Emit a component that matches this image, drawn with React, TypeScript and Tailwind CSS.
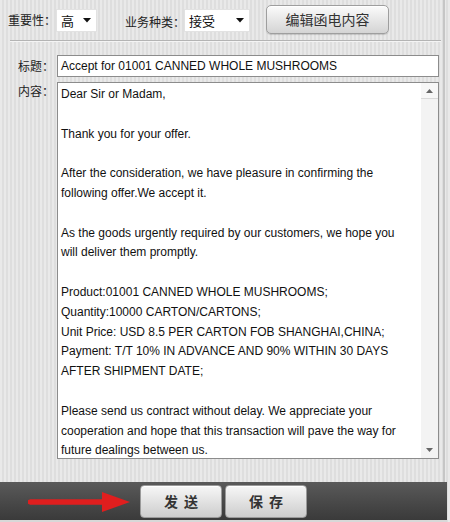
import React from "react";

const CJK = "font-['Noto_Sans_CJK_SC','Noto_Sans',sans-serif]";
const LATIN = "font-['Liberation_Sans','Noto_Sans_CJK_SC',sans-serif]";

const lines = [
  "Dear Sir or Madam,",
  "",
  "Thank you for your offer.",
  "",
  "After the consideration, we have pleasure in confirming the",
  "following offer.We accept it.",
  "",
  "As the goods urgently required by our customers, we hope you",
  "will deliver them promptly.",
  "",
  "Product:01001 CANNED WHOLE MUSHROOMS;",
  "Quantity:10000 CARTON/CARTONS;",
  "Unit Price: USD 8.5 PER CARTON FOB SHANGHAI,CHINA;",
  "Payment: T/T 10% IN ADVANCE AND 90% WITHIN 30 DAYS",
  "AFTER SHIPMENT DATE;",
  "",
  "Please send us contract without delay. We appreciate your",
  "cooperation and hope that this transaction will pave the way for",
  "future dealings between us.",
];

const Caret = () => (
  <svg width="8" height="5" viewBox="0 0 8 5" className="shrink-0">
    <path d="M0 0h8L4 4.5z" fill="#111" />
  </svg>
);

const Select = ({ value, w }: { value: string; w: string }) => (
  <div className={`flex h-[21px] ${w} items-center justify-between bg-white pl-[4px] pr-[5px] shadow-[0_0_0_1px_#e2e2e2]`}>
    <span className={`${CJK} text-[13px] leading-none text-[#111]`}>{value}</span>
    <Caret />
  </div>
);

const BarButton = ({ label }: { label: string }) => (
  <button className={`${CJK} flex h-[33px] w-[82px] items-center justify-center rounded-[4px] border border-[#9a9a9a] bg-gradient-to-b from-[#f7f7f7] to-[#cdcdcd] text-[14px] font-bold tracking-[6px] text-[#333] shadow-[inset_0_1px_0_#fff]`}>
    <span className="pl-[6px]">{label}</span>
  </button>
);

export default function App() {
  return (
    <div className="flex h-[522px] w-[450px] flex-col overflow-hidden bg-[repeating-linear-gradient(90deg,#e9e9e9_0px,#e9e9e9_2px,#dedede_2px,#dedede_4px)]">
      <div className="flex w-[445px] flex-1 flex-col border-r-2 border-[#c6c6c6]">
        {/* top row */}
        <div className="flex h-[40px] items-center">
          <span className={`${CJK} ml-[8px] w-[49px] text-[12px] text-[#222]`}>重要性：</span>
          <Select value="高" w="w-[39px]" />
          <span className={`${CJK} ml-[29px] mt-[3px] w-[60px] text-[12px] text-[#222]`}>业务种类：</span>
          <Select value="接受" w="w-[64px]" />
          <button className={`${CJK} ml-[17px] mt-[-1px] h-[29px] w-[123px] rounded-[5px] border border-[#9e9e9e] bg-gradient-to-b from-[#fbfbfb] to-[#d4d4d4] text-[14px] text-[#333] shadow-[0_1px_1px_rgba(0,0,0,0.15),inset_0_1px_0_#fff]`}>
            编辑函电内容
          </button>
        </div>
        <div className="ml-[10px] h-[2px] w-[431px] border-t border-b border-t-[#b4b4b4] border-b-[#f4f4f4]" />

        {/* title */}
        <div className="mt-[13px] flex h-[22px] items-center">
          <span className={`${CJK} w-[57px] pr-[3px] text-right text-[12px] text-[#222]`}>标题：</span>
          <div className={`${LATIN} flex h-[22px] w-[382px] items-center border border-[#8c8c8c] bg-white pl-[3px] text-[12px] text-[#111]`}>
            Accept for 01001 CANNED WHOLE MUSHROOMS
          </div>
        </div>

        {/* content */}
        <div className="mt-[5px] flex">
          <span className={`${CJK} w-[57px] pr-[3px] pt-[1px] text-right text-[12px] leading-[16px] text-[#222]`}>内容：</span>
          <div className="flex h-[377px] w-[382px] border border-[#8c8c8c] bg-white">
            <div className={`${LATIN} flex-1 overflow-hidden pl-[3px] pt-[2px] text-[12px] leading-[19.8px] text-[#111]`}>
              {lines.map((l, i) => (
                <div key={i} className="h-[19.8px] whitespace-pre">{l}</div>
              ))}
            </div>
            <div className="flex w-[17px] flex-col bg-[#f3f3f3]">
              <div className="flex h-[16px] items-center justify-center border-b border-[#d9d9d9] bg-[#f7f7f7]">
                <svg width="7" height="4" viewBox="0 0 7 4"><path d="M0 4h7L3.5 0z" fill="#666" /></svg>
              </div>
              <div className="flex-1" />
              <div className="flex h-[16px] items-center justify-center bg-[#f3f3f3]">
                <svg width="7" height="4" viewBox="0 0 7 4"><path d="M0 0h7L3.5 4z" fill="#666" /></svg>
              </div>
            </div>
          </div>
        </div>
        <div className="flex-1" />
      </div>

      {/* bottom bar */}
      <div className="flex h-[40px] w-[447px] items-start border-b-2 border-[#d8d8d8] bg-gradient-to-b from-[#5a5a5a] to-[#3a3a3a] pt-[3px]">
        <svg width="104" height="22" viewBox="0 0 104 22" className="ml-[28px] mt-[-2px] self-center">
          <path d="M2 8.5h74v5H2z" fill="#e01e1e" />
          <path d="M2 11h74" stroke="#e01e1e" strokeWidth="5" strokeLinecap="round" />
          <path d="M74 1L102 11L74 21z" fill="#e01e1e" />
        </svg>
        <div className="ml-[8px] flex gap-[3px]">
          <BarButton label="发送" />
          <BarButton label="保存" />
        </div>
      </div>
    </div>
  );
}
